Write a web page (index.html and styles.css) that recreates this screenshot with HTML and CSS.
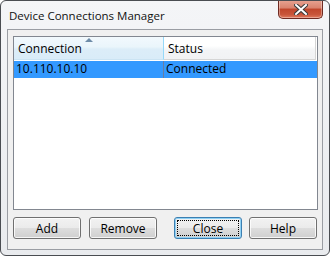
FILE: index.html
```html
<!DOCTYPE html>
<html lang="en">
<head>
    <meta charset="UTF-8">
    <title>Device Connections Manager</title>
    <link rel="stylesheet" href="styles.css">
</head>
<body>
    <div class="window">
        <div class="titlebar">
            <div class="title">Device Connections Manager</div>
            <button class="close-x" aria-label="Close">
                <svg width="14" height="11" viewBox="0 0 14 11">
                    <path d="M2 1 L12 10 M12 1 L2 10" stroke="#3b3b3b" stroke-width="4" stroke-linecap="square"/>
                    <path d="M2 1 L12 10 M12 1 L2 10" stroke="#ffffff" stroke-width="2" stroke-linecap="square"/>
                </svg>
            </button>
        </div>

        <div class="client">
            <div class="listview">
                <div class="list-header">
                    <div class="col col-conn sorted">
                        <span class="sort-arrow"></span>
                        Connection
                    </div>
                    <div class="col col-status">Status</div>
                </div>
                <div class="list-row selected">
                    <div class="cell col-conn">10.110.10.10</div>
                    <div class="cell col-status">Connected</div>
                </div>
            </div>

            <div class="button-row">
                <div class="button-group">
                    <button class="btn">Add</button>
                    <button class="btn">Remove</button>
                </div>
                <div class="button-group">
                    <button class="btn focused">Close</button>
                    <button class="btn">Help</button>
                </div>
            </div>
        </div>
    </div>
</body>
</html>
```
FILE: styles.css
```css
* {
    margin: 0;
    padding: 0;
    box-sizing: border-box;
}

body {
    background-color: #ffffff;
    font-family: "Open Sans", "Liberation Sans", sans-serif;
    font-size: 12px;
    color: #000000;
}

.window {
    width: 330px;
    height: 256px;
    border: 1px solid #4a4d52;
    border-radius: 6px;
    background: linear-gradient(#f4f5f7, #e9ebee);
    display: flex;
    flex-direction: column;
    overflow: hidden;
}

.titlebar {
    height: 28px;
    display: flex;
    justify-content: space-between;
    align-items: flex-start;
    padding-left: 8px;
    padding-right: 6px;
}

.title {
    font-size: 11.5px;
    line-height: 14px;
    margin-top: 8px;
    color: #111;
}

.close-x {
    width: 45px;
    height: 19px;
    margin-top: -1px;
    border: 1px solid #6e2a22;
    border-top: none;
    border-radius: 0 0 5px 5px;
    background: linear-gradient(#e8a493 0%, #d9826d 45%, #c0452b 50%, #c8553a 80%, #e07a5e 100%);
    display: flex;
    justify-content: center;
    align-items: center;
    box-shadow: inset 0 0 0 1px rgba(255, 255, 255, 0.35);
}

.client {
    flex: 1;
    margin: 0 6px 5px 6px;
    border: 1px solid #9a9da3;
    background-color: #f0f0f0;
    padding: 6px 4px 0 5px;
    display: flex;
    flex-direction: column;
}

.listview {
    height: 174px;
    border: 1px solid #828790;
    background-color: #ffffff;
}

.list-header {
    display: flex;
    height: 23px;
}

.list-header .col {
    position: relative;
    padding-left: 4px;
    padding-top: 5px;
    line-height: 14px;
    border-right: 1px solid #d5d5d5;
    border-bottom: 1px solid #d5d5d5;
    background: linear-gradient(#ffffff 0%, #ffffff 40%, #f3f4f6 60%, #f1f2f4 100%);
}

.list-header .col.sorted {
    background: linear-gradient(#f2f9fd 0%, #eaf5fb 45%, #dcedf8 55%, #d9ecf8 100%);
    border-right: 1px solid #96d9f9;
    border-bottom: 1px solid #cbe4f3;
}

.sort-arrow {
    position: absolute;
    top: 1px;
    left: 71px;
    width: 0;
    height: 0;
    border-left: 4px solid transparent;
    border-right: 4px solid transparent;
    border-bottom: 4px solid #6e8ca8;
}

.col-conn {
    width: 150px;
}

.col-status {
    width: 152px;
}

.list-row {
    display: flex;
    height: 17px;
    margin-top: 1px;
}

.list-row .cell {
    padding-left: 2px;
    line-height: 16px;
}

.list-row.selected {
    background-color: #3399ff;
}

.list-row.selected .col-conn {
    border-right: 1px solid #6a7da0;
}

.list-row .col-status {
    padding-left: 2px;
}

.button-row {
    display: flex;
    justify-content: space-between;
    margin-top: 7px;
    padding-right: 1px;
}

.button-group {
    display: flex;
    gap: 8px;
}

.button-group + .button-group {
    gap: 7px;
}

.btn {
    width: 68px;
    height: 22px;
    font-family: "Open Sans", "Liberation Sans", sans-serif;
    font-size: 12px;
    color: #000;
    border: 1px solid #707070;
    border-radius: 3px;
    background: linear-gradient(#f2f2f2 0%, #ebebeb 48%, #dddddd 52%, #cfcfcf 100%);
    box-shadow: inset 0 0 0 1px rgba(255, 255, 255, 0.8);
    cursor: pointer;
}

.btn.focused {
    border-color: #3c7fb1;
    box-shadow: inset 0 0 0 1px #8fd1f5;
    outline: 1px dotted #000;
    outline-offset: -4px;
}
```
